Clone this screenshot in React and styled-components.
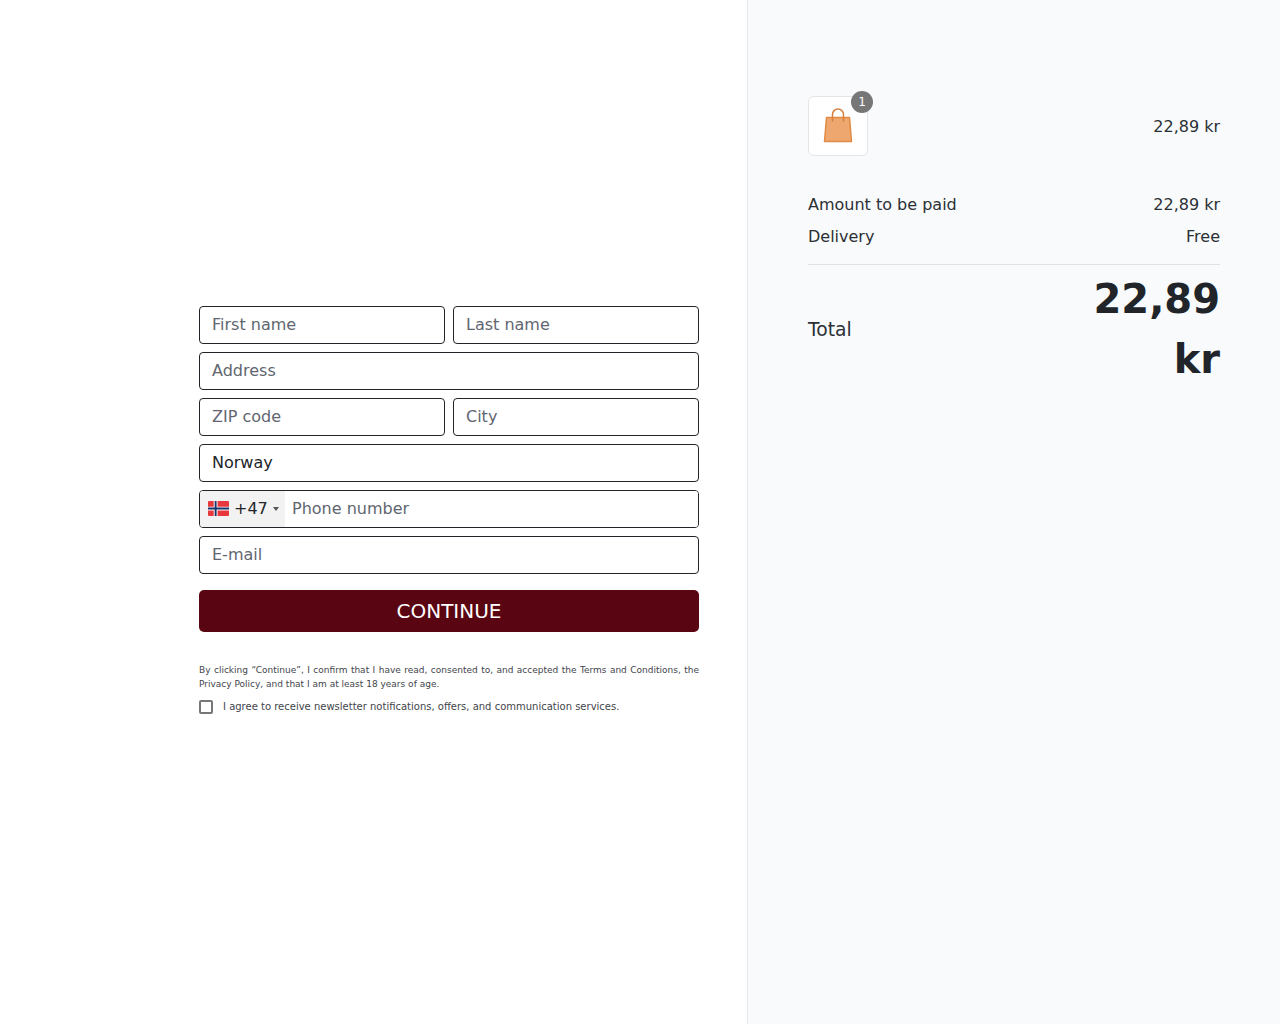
import React from "react";
import styled, { createGlobalStyle } from "styled-components";

const GlobalStyle = createGlobalStyle`
  * {
    box-sizing: border-box;
  }
  body {
    margin: 0;
    background: #fff;
    color: #2b3035;
    font-family: "DejaVu Sans", sans-serif;
  }
`;

const BagIcon = () => (
  <svg width="30" height="36" viewBox="0 0 30 36" fill="none">
    <path d="M3.500 9.500h23L28.500 33.500h-27z" fill="#eea86f" stroke="#e08a45" strokeWidth="1.500" strokeLinejoin="round" />
    <path d="M9.500 13V6.500a5.500 5.500 0 0 1 11 0V13" stroke="#d97f38" strokeWidth="1.500" strokeLinecap="round" />
  </svg>
);

const NorwayFlag = () => (
  <svg width="21" height="15" viewBox="0 0 22 16" preserveAspectRatio="none">
    <rect width="22" height="16" rx="1" fill="#e8383c" />
    <path d="M6 0h4v16H6zM0 6h22v4H0z" fill="#fff" />
    <path d="M7 0h2v16H7zM0 7h22v2H0z" fill="#17336b" />
  </svg>
);

const App = () => {
  return (
    <Page>
      <GlobalStyle />
      <FormSide>
        <Form onSubmit={(e) => e.preventDefault()}>
          <Row>
            <Input placeholder="First name" />
            <Input placeholder="Last name" />
          </Row>
          <Input placeholder="Address" />
          <Row>
            <Input placeholder="ZIP code" />
            <Input placeholder="City" />
          </Row>
          <Input defaultValue="Norway" />
          <PhoneField>
            <CountryPicker>
              <NorwayFlag />
              <DialCode>+47</DialCode>
              <Caret />
            </CountryPicker>
            <PhoneInput placeholder="Phone number" />
          </PhoneField>
          <Input placeholder="E-mail" />
          <Submit>CONTINUE</Submit>
          <Terms>
            By clicking “Continue”, I confirm that I have read, consented to, and accepted the
            Terms and Conditions, the Privacy Policy, and that I am at least 18 years of age.
          </Terms>
          <Newsletter>
            <Checkbox type="checkbox" />
            I agree to receive newsletter notifications, offers, and communication services.
          </Newsletter>
        </Form>
      </FormSide>

      <Summary>
        <Product>
          <Thumb>
            <BagIcon />
            <Badge>1</Badge>
          </Thumb>
          <span>22,89 kr</span>
        </Product>
        <Line>
          <span>Amount to be paid</span>
          <span>22,89 kr</span>
        </Line>
        <Line>
          <span>Delivery</span>
          <span>Free</span>
        </Line>
        <TotalRow>
          <TotalLabel>Total</TotalLabel>
          <TotalValue>22,89 kr</TotalValue>
        </TotalRow>
      </Summary>
    </Page>
  );
};

export default App;

const Page = styled.main`
  display: flex;
  min-height: 1024px;
`;

const FormSide = styled.section`
  width: 748px;
  padding: 0 48px 4px 0;
  display: flex;
  align-items: center;
  justify-content: flex-end;
  border-right: 1px solid #e5e7eb;
`;

const Form = styled.form`
  width: 500px;
  display: flex;
  flex-direction: column;
  gap: 8px;
`;

const Row = styled.div`
  display: grid;
  grid-template-columns: 1fr 1fr;
  gap: 8px;
`;

const Input = styled.input`
  width: 100%;
  min-width: 0;
  height: 38px;
  padding: 0 12px 2px;
  border: 1px solid #212529;
  border-radius: 4px;
  outline: none;
  background: #fff;
  color: #212529;
  font-family: inherit;
  font-size: 16px;

  &::placeholder {
    color: #5f6670;
    opacity: 1;
  }
`;

const PhoneField = styled.div`
  display: flex;
  height: 38px;
  border: 1px solid #212529;
  border-radius: 4px;
  overflow: hidden;
`;

const CountryPicker = styled.div`
  display: flex;
  align-items: center;
  width: 85px;
  padding: 0 0 2px 8px;
  background: #f2f2f2;
`;

const DialCode = styled.span`
  margin-left: 5px;
  color: #212529;
  font-size: 16px;
`;

const Caret = styled.i`
  margin: 2px 0 0 5px;
  border-top: 4px solid #555;
  border-left: 3px solid transparent;
  border-right: 3px solid transparent;
`;

const PhoneInput = styled.input`
  flex: 1;
  min-width: 0;
  padding: 0 7px 2px;
  border: 0;
  outline: none;
  color: #212529;
  font-family: inherit;
  font-size: 16px;

  &::placeholder {
    color: #5f6670;
    opacity: 1;
  }
`;

const Submit = styled.button`
  height: 42px;
  margin-top: 8px;
  padding-bottom: 2px;
  border: 0;
  border-radius: 5px;
  background: #5a0512;
  color: #fff;
  font-family: inherit;
  font-size: 20px;
  cursor: pointer;
`;

const Terms = styled.p`
  margin: 23px 0 0;
  color: #3f454b;
  font-size: 9px;
  line-height: 14px;
  text-align: justify;
`;

const Newsletter = styled.label`
  display: flex;
  align-items: center;
  gap: 10px;
  color: #3f454b;
  font-size: 10px;
  line-height: 14px;
`;

const Checkbox = styled.input`
  appearance: none;
  width: 14px;
  height: 14px;
  margin: 1px 0 0;
  border: 2px solid #777;
  border-radius: 2px;
  background: #fff;
`;

const Summary = styled.aside`
  flex: 1;
  padding: 96px 60px 0;
  background: #f8fafc;
  font-size: 16px;
`;

const Product = styled.div`
  display: flex;
  align-items: center;
  justify-content: space-between;
  margin-bottom: 37px;
`;

const Thumb = styled.div`
  position: relative;
  display: flex;
  align-items: center;
  justify-content: center;
  width: 60px;
  height: 60px;
  border: 1px solid #e3e5e8;
  border-radius: 6px;
  background: #fff;
`;

const Badge = styled.span`
  position: absolute;
  top: -6px;
  right: -6px;
  width: 22px;
  height: 22px;
  border-radius: 50%;
  background: #777;
  color: #fff;
  font-size: 12px;
  line-height: 22px;
  text-align: center;
`;

const Line = styled.div`
  display: flex;
  justify-content: space-between;
  height: 32px;
  line-height: 24px;
`;

const TotalRow = styled.div`
  display: flex;
  align-items: center;
  justify-content: space-between;
  margin-top: 7px;
  padding-top: 4px;
  border-top: 1px solid #dee2e6;
`;

const TotalLabel = styled.span`
  font-size: 18.72px;
`;

const TotalValue = styled.strong`
  width: 140px;
  color: #212529;
  font-size: 40px;
  line-height: 60px;
  text-align: right;
`;
